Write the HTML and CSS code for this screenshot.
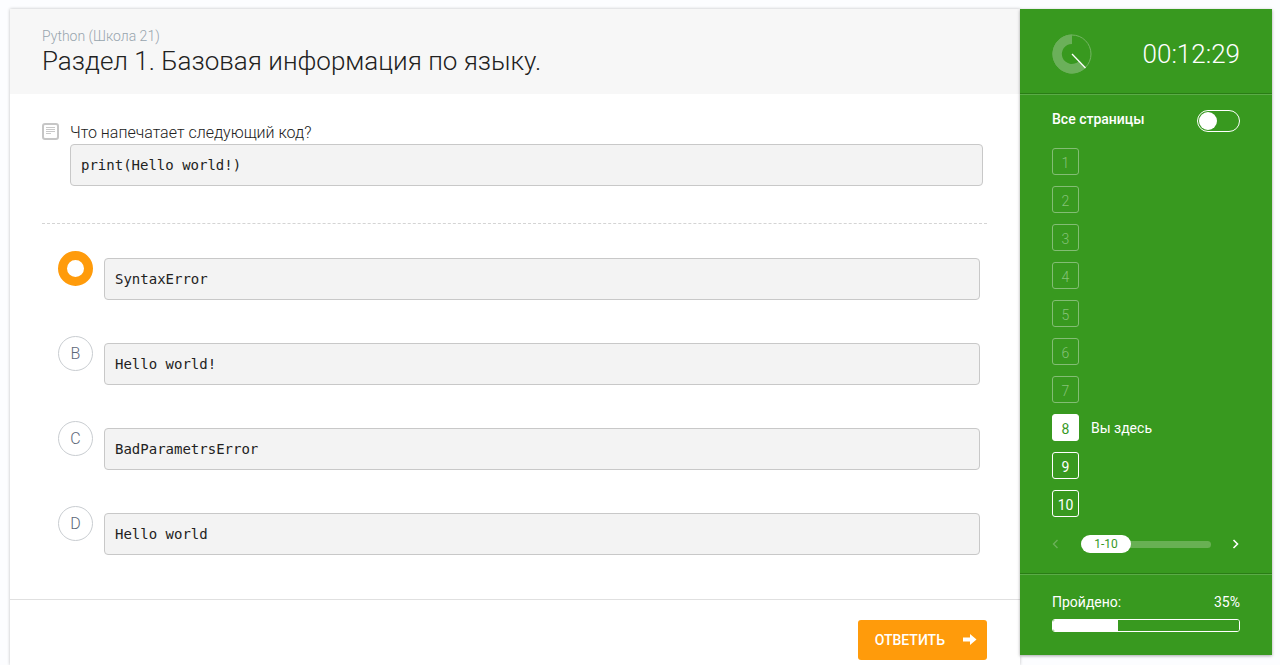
FILE: index.html
```html
<!DOCTYPE html>
<html lang="ru">
<head>
<meta charset="utf-8">
<meta name="viewport" content="width=device-width, initial-scale=1">
<title>Python (Школа 21)</title>
<link rel="stylesheet" href="styles.css">
</head>
<body>
<div class="quiz">
  <main class="panel">
    <header class="panel-header">
      <p class="course">Python (Школа 21)</p>
      <h1 class="section-title">Раздел 1. Базовая информация по языку.</h1>
    </header>
    <form class="task">
      <section class="question">
        <svg class="question-icon" viewBox="0 0 17 17" aria-hidden="true">
          <rect x="1" y="1" width="15" height="15" rx="2" fill="#fff" stroke="#c6c6c6" stroke-width="2"/>
          <path d="M4 4.5h9M4 6.5h9M4 8.5h9M4 10.5h5" stroke="#c9c9c9" stroke-width="1"/>
        </svg>
        <div class="question-body">
          <p class="question-text" id="question">Что напечатает следующий код?</p>
          <pre class="code">print(Hello world!)</pre>
        </div>
      </section>
      <div class="answers" role="radiogroup" aria-labelledby="question">
        <label class="answer">
          <span class="choice"><input class="choice-input" type="radio" name="answer" checked></span>
          <code class="code">SyntaxError</code>
        </label>
        <label class="answer">
          <span class="choice"><input class="choice-input" type="radio" name="answer"><span class="choice-letter">B</span></span>
          <code class="code">Hello world!</code>
        </label>
        <label class="answer">
          <span class="choice"><input class="choice-input" type="radio" name="answer"><span class="choice-letter">C</span></span>
          <code class="code">BadParametrsError</code>
        </label>
        <label class="answer">
          <span class="choice"><input class="choice-input" type="radio" name="answer"><span class="choice-letter">D</span></span>
          <code class="code">Hello world</code>
        </label>
      </div>
      <footer class="task-footer">
        <button class="submit" type="submit">ОТВЕТИТЬ
          <svg class="submit-icon" viewBox="0 0 14 12" aria-hidden="true"><path d="M0 3.5h7V0L13.5 5.5 7 11V7.5H0z" fill="#fff"/></svg>
        </button>
      </footer>
    </form>
  </main>

  <aside class="sidebar">
    <div class="timer">
      <svg class="timer-dial" viewBox="0 0 40 40" aria-hidden="true">
        <circle cx="20" cy="20" r="19" fill="none" stroke="#74b563" stroke-width="1"/>
        <path d="M20 .5A19.5 19.5 0 1 0 33.2 34.3L26.8 27.2A10 10 0 1 1 20 10z" fill="#6bb05a"/>
        <path d="M20 20L33.5 34" stroke="#fff" stroke-width="1.3"/>
      </svg>
      <time class="timer-value">00:12:29</time>
    </div>
    <nav class="pages" aria-label="Страницы">
      <div class="all-pages"><label for="all-pages">Все страницы</label><input class="switch" id="all-pages" type="checkbox" role="switch"></div>
      <ol class="page-list">
        <li class="page"><button class="page-number" disabled>1</button></li>
        <li class="page"><button class="page-number" disabled>2</button></li>
        <li class="page"><button class="page-number" disabled>3</button></li>
        <li class="page"><button class="page-number" disabled>4</button></li>
        <li class="page"><button class="page-number" disabled>5</button></li>
        <li class="page"><button class="page-number" disabled>6</button></li>
        <li class="page"><button class="page-number" disabled>7</button></li>
        <li class="page"><button class="page-number page-current" aria-current="page">8</button><span>Вы здесь</span></li>
        <li class="page"><button class="page-number">9</button></li>
        <li class="page"><button class="page-number">10</button></li>
      </ol>
      <div class="pager">
        <button class="pager-arrow" aria-label="Назад" disabled><svg class="arrow-icon" viewBox="0 0 7 10"><path d="M5.5 1L1.5 5l4 4" fill="none" stroke="currentColor" stroke-width="1.4"/></svg></button>
        <div class="pager-slider">
          <input class="pager-range" type="range" min="0" max="10" value="0" aria-label="Диапазон страниц">
          <span class="pager-label">1-10</span>
        </div>
        <button class="pager-arrow" aria-label="Вперёд"><svg class="arrow-icon" viewBox="0 0 7 10"><path d="M1.5 1l4 4-4 4" fill="none" stroke="currentColor" stroke-width="1.6"/></svg></button>
      </div>
    </nav>
    <div class="passed">
      <div class="passed-row"><label for="passed">Пройдено:</label><span>35%</span></div>
      <progress class="passed-bar" id="passed" max="100" value="35"></progress>
    </div>
  </aside>
</div>
</body>
</html>
```
FILE: styles.css
```css
* {
  box-sizing: border-box;
}

body {
  margin: 0;
  background: #fcfdff;
  color: #222;
  font-family: Roboto, "Liberation Sans", sans-serif;
  font-size: 14px;
}

p,
h1,
ol,
pre {
  margin: 0;
  padding: 0;
}

button {
  padding: 0;
  border: 0;
  background: none;
  color: inherit;
  font: inherit;
}

input {
  appearance: none;
  margin: 0;
}

.quiz {
  display: flex;
  align-items: flex-start;
  min-height: 100vh;
  padding: 9px 8px 0 10px;
}

.panel {
  display: flex;
  flex: 1;
  flex-direction: column;
  align-self: stretch;
  background: #fff;
  box-shadow: 0 0 3px rgba(0, 0, 0, 0.25);
}

.panel-header {
  height: 85px;
  padding: 19px 32px 0;
  background: #f7f7f7;
}

.course {
  color: #98a5ae;
  font-size: 14px;
  font-weight: 300;
  line-height: 17px;
}

.section-title {
  color: #222;
  font-size: 26px;
  font-weight: 300;
  line-height: 32px;
}

.question {
  display: flex;
  gap: 11px;
  margin: 0 33px 0 32px;
  padding: 28px 4px 37px 0;
  border-bottom: 1px dashed #d4d4d4;
}

.question-icon {
  flex: none;
  width: 17px;
  height: 17px;
  margin-top: 1px;
}

.question-body {
  flex: 1;
}

.question-text {
  font-size: 16px;
  font-weight: 300;
  line-height: 22px;
}

.code {
  display: block;
  flex: 1;
  padding: 10px;
  border: 1px solid #c8c8c8;
  border-radius: 4px;
  background: #f3f3f3;
  color: #222;
  font-family: "DejaVu Sans Mono", monospace;
  font-size: 14px;
  line-height: 20px;
}

.answers {
  display: grid;
  gap: 36px;
  padding: 27px 40px 44px 48px;
}

.answer {
  display: flex;
  align-items: flex-end;
  gap: 11px;
  height: 49px;
}

.choice {
  display: grid;
  align-self: flex-start;
  width: 35px;
  height: 35px;
}

.choice-input,
.choice-letter {
  grid-area: 1 / 1;
}

.choice-input {
  border: 1px solid #c9cdd1;
  border-radius: 50%;
  background: #fff;
}

.choice-input:checked {
  border: 9px solid #ff9b0b;
}

.choice-letter {
  place-self: center;
  color: #5c6778;
  font-size: 16px;
  font-weight: 300;
  line-height: 18px;
  pointer-events: none;
}

.task-footer {
  display: flex;
  justify-content: flex-end;
  padding: 20px 33px 5px;
  border-top: 1px solid #e0e0e0;
}

.submit {
  display: flex;
  align-items: center;
  gap: 18px;
  height: 40px;
  padding: 0 10px 0 17px;
  border-radius: 3px;
  background: #ff9b0b;
  color: #fff;
  font-weight: 500;
}

.submit-icon {
  width: 14px;
  height: 12px;
}

.sidebar {
  z-index: 1;
  flex: none;
  width: 252px;
  background: #38991f;
  box-shadow: 0 1px 3px rgba(0, 0, 0, 0.35);
  color: #fff;
}

.timer {
  display: flex;
  align-items: center;
  justify-content: space-between;
  height: 85px;
  padding: 5px 32px 0;
  border-bottom: 1px solid #2a7d15;
}

.timer-dial {
  width: 40px;
  height: 40px;
}

.timer-value {
  font-size: 26px;
  font-weight: 300;
  line-height: 30px;
}

.pages {
  padding: 15px 32px 20px;
  border-top: 1px solid #5bab47;
  border-bottom: 1px solid #2a7d15;
}

.all-pages {
  display: flex;
  align-items: flex-start;
  justify-content: space-between;
  font-weight: 500;
  line-height: 18px;
}

.switch {
  display: flex;
  align-items: center;
  width: 43px;
  height: 22px;
  padding: 1px;
  border: 1px solid #fff;
  border-radius: 11px;
}

.switch::before {
  width: 18px;
  height: 18px;
  border-radius: 50%;
  background: #fff;
  content: "";
}

.switch:checked {
  justify-content: flex-end;
}

.page-list {
  display: grid;
  gap: 11px;
  padding-top: 16px;
  list-style: none;
}

.page {
  display: flex;
  align-items: center;
  gap: 12px;
}

.page-number {
  width: 27px;
  height: 27px;
  padding-top: 2px;
  border: 1px solid #fff;
  border-radius: 3px;
}

.page-number:disabled {
  border-color: #83bd74;
  color: #86c178;
  font-weight: 300;
}

.page-current {
  background: #fff;
  color: #38991f;
}

.pager {
  display: flex;
  align-items: center;
  gap: 21px;
  padding-top: 18px;
}

.pager-arrow {
  display: flex;
  width: 8px;
}

.pager-arrow:disabled {
  color: #6bb05a;
}

.arrow-icon {
  width: 7px;
  height: 10px;
}

.pager-slider {
  display: grid;
  flex: 1;
  align-items: center;
}

.pager-range,
.pager-label {
  grid-area: 1 / 1;
}

.pager-range {
  width: 100%;
  height: 18px;
  background: none;
}

.pager-range::-webkit-slider-runnable-track {
  height: 7px;
  border-radius: 4px;
  background: #68b053;
}

.pager-range::-webkit-slider-thumb {
  appearance: none;
  width: 50px;
  height: 18px;
  margin-top: -6px;
  border-radius: 9px;
  background: #fff;
}

.pager-label {
  z-index: 1;
  width: 50px;
  color: #38991f;
  font-size: 12px;
  line-height: 18px;
  text-align: center;
  pointer-events: none;
}

.passed {
  padding: 17px 32px 23px;
  border-top: 1px solid #5bab47;
}

.passed-row {
  display: flex;
  justify-content: space-between;
  line-height: 20px;
}

.passed-bar {
  display: block;
  appearance: none;
  width: 100%;
  height: 13px;
  margin-top: 7px;
  overflow: hidden;
  border: 1px solid #fff;
  border-radius: 3px;
}

.passed-bar::-webkit-progress-bar {
  background: #38991f;
}

.passed-bar::-webkit-progress-value {
  background: #fff;
}
```
